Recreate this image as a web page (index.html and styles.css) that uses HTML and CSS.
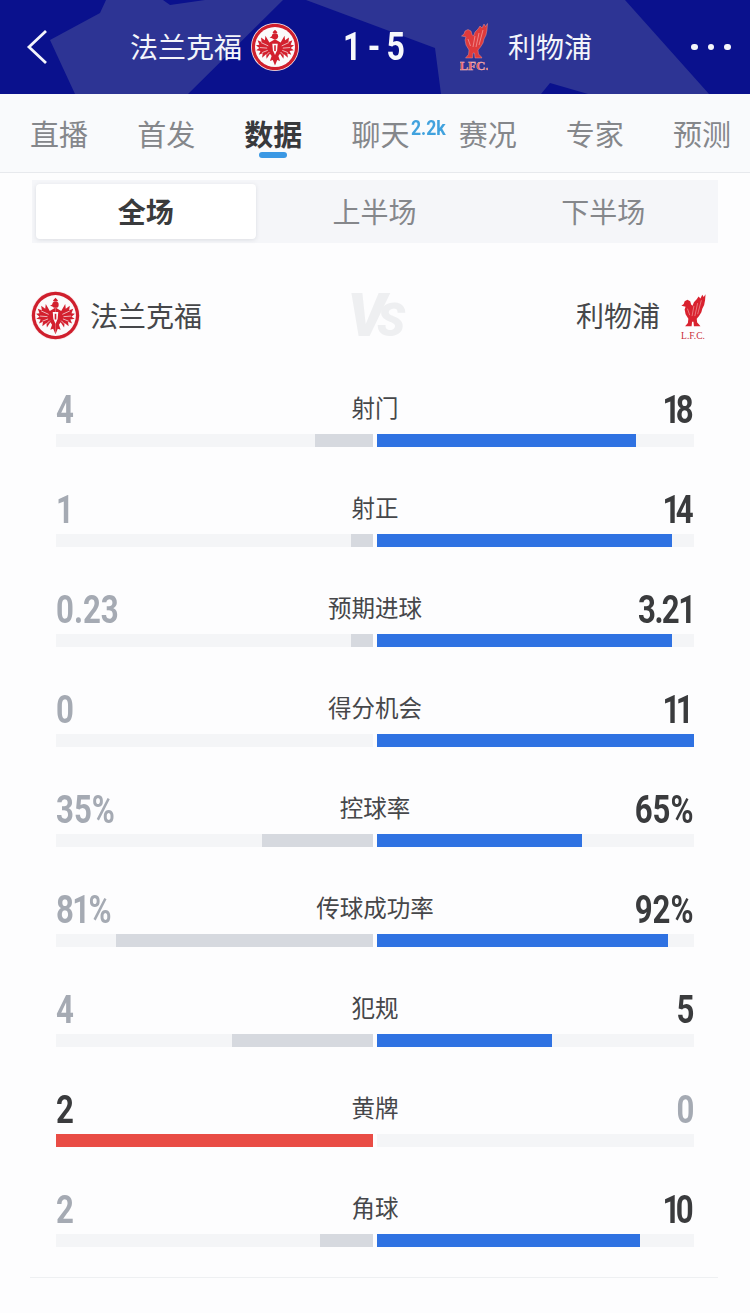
FILE: index.html
```html
<!DOCTYPE html>
<html lang="zh-CN">
<head>
<meta charset="utf-8">
<title>法兰克福 1-5 利物浦</title>
<link rel="stylesheet" href="styles.css">
</head>
<body>
<svg class="defs" width="0" height="0" aria-hidden="true">
  <symbol id="eagle-wing" viewBox="0 0 48 48">
    <path d="M24 17L19 20 15.500 14 15 18 11.500 15.500 12 19.500 8.500 18 10 22 7 22.500 10 25 7.200 26.800 11 27.500 9.500 31 13 29.500 12.500 33.500 16 30.500 16.500 34.500 19.500 30 21 32 19.500 36.500 22 35.500 24 40.500z"/>
    <path class="eagle-line" d="M18 23L11.500 20M17 25L10.500 24.500M17.500 27L12.500 29M19 28.500L15.500 32"/>
  </symbol>
  <symbol id="eagle" viewBox="0 0 48 48">
    <circle cx="24" cy="24" r="24" fill="#fbe9ea"/>
    <circle cx="24" cy="24" r="23.200" fill="#cf1f2d"/>
    <circle cx="24" cy="24" r="20" fill="#fbfbfb"/>
    <g fill="#d3202e" transform="translate(24 24) scale(1.120) translate(-24 -24)">
      <use href="#eagle-wing" width="48" height="48"/>
      <use href="#eagle-wing" width="48" height="48" transform="matrix(-1 0 0 1 48 0)"/>
      <circle cx="24" cy="14.500" r="2.800"/>
      <path d="M22 14l-2.800 1.500 3 .8zM21.800 10.800L24 8.500l2.200 2.300-.8 1h-2.800z"/>
      <path fill="#fbfbfb" d="M21.600 21h4.800l-.5 6-1.900 4.200-1.900-4.200z"/>
      <path d="M23.300 22.500h1.400v5h-1.400z"/>
    </g>
  </symbol>
  <symbol id="liverbird" viewBox="0 0 28 36">
    <path d="M1.500 13L4 11 5 8 8 6.500 11 8 12 11.500 13.500 13 15 9 18 6 20 3 22 5 24 1 25.500 3.500 27.500.5 27 7 26 12 24 16 23 20 20.500 24 18 27 18.500 31 21 33.500 22 35 15 35 14.500 30 13 30 12.500 35 5.500 35 8.500 31.500 9 27 6 22 5 17 6 14 4 13.500z"/>
    <path class="bird-line" d="M15 13L13 24M19 10L16 24M23 7L19 22M8 16L10.500 23"/>
  </symbol>
</svg>

<header class="match-bar">
  <svg class="match-bg" viewBox="0 0 750 94" preserveAspectRatio="none" aria-hidden="true">
    <path class="shard" d="M50 40L100 13 106 0H283L188 94H75z"/>
    <path class="shard" d="M306 0H625L709 94H588L550 83 541 94H441L435 48z"/>
    <path class="notch" d="M163 0H205L170 5z"/>
  </svg>
  <svg class="back" viewBox="0 0 22 36" aria-hidden="true"><path d="M20 2L3 18l17 16"/></svg>
  <div class="match-home">
    <span class="match-team">法兰克福</span>
    <svg class="match-crest"><use href="#eagle"/></svg>
  </div>
  <div class="score"><span class="num score-num">1 - 5</span></div>
  <div class="match-away">
    <svg class="match-bird" viewBox="0 0 28 48" aria-hidden="true">
      <use href="#liverbird" width="28" height="36"/>
      <text x="14" y="46.500" class="lfc-text">LFC.</text>
    </svg>
    <span class="match-team">利物浦</span>
  </div>
  <div class="dots"><i></i><i></i><i></i></div>
</header>

<nav class="tabs">
  <span class="tab">直播</span>
  <span class="tab">首发</span>
  <span class="tab tab-on">数据</span>
  <span class="tab">聊天<b class="tab-badge">2.2k</b></span>
  <span class="tab">赛况</span>
  <span class="tab">专家</span>
  <span class="tab">预测</span>
</nav>

<main>
  <div class="segment">
    <span class="seg seg-on">全场</span>
    <span class="seg">上半场</span>
    <span class="seg">下半场</span>
  </div>

  <div class="teams">
    <div class="team">
      <svg class="team-crest"><use href="#eagle"/></svg>
      <span class="team-name">法兰克福</span>
    </div>
    <div class="vs">VS</div>
    <div class="team team-away">
      <span class="team-name">利物浦</span>
      <svg class="team-bird" viewBox="0 0 26 47" aria-hidden="true">
        <use href="#liverbird" width="26" height="37"/>
        <text x="13" y="46.500" class="lfc-page">L.F.C.</text>
      </svg>
    </div>
  </div>

  <section class="stats">
    <div class="stat">
      <div class="stat-head"><div class="val"><span class="num dim">4</span></div><div class="stat-name">射门</div><div class="val val-r"><span class="num tight">18</span></div></div>
      <div class="bars"><div class="track track-l"><div class="fill gray" style="width:18.3%"></div></div><div class="track"><div class="fill blue" style="width:81.7%"></div></div></div>
    </div>
    <div class="stat">
      <div class="stat-head"><div class="val"><span class="num dim">1</span></div><div class="stat-name">射正</div><div class="val val-r"><span class="num tight">14</span></div></div>
      <div class="bars"><div class="track track-l"><div class="fill gray" style="width:6.9%"></div></div><div class="track"><div class="fill blue" style="width:93%"></div></div></div>
    </div>
    <div class="stat">
      <div class="stat-head"><div class="val"><span class="num dim">0.23</span></div><div class="stat-name">预期进球</div><div class="val val-r"><span class="num snug">3.21</span></div></div>
      <div class="bars"><div class="track track-l"><div class="fill gray" style="width:6.9%"></div></div><div class="track"><div class="fill blue" style="width:93%"></div></div></div>
    </div>
    <div class="stat">
      <div class="stat-head"><div class="val"><span class="num dim">0</span></div><div class="stat-name">得分机会</div><div class="val val-r"><span class="num tight">11</span></div></div>
      <div class="bars"><div class="track track-l"></div><div class="track"><div class="fill blue" style="width:100%"></div></div></div>
    </div>
    <div class="stat">
      <div class="stat-head"><div class="val"><span class="num dim">35%</span></div><div class="stat-name">控球率</div><div class="val val-r"><span class="num">65%</span></div></div>
      <div class="bars"><div class="track track-l"><div class="fill gray" style="width:35%"></div></div><div class="track"><div class="fill blue" style="width:64.7%"></div></div></div>
    </div>
    <div class="stat">
      <div class="stat-head"><div class="val"><span class="num dim snug">81%</span></div><div class="stat-name">传球成功率</div><div class="val val-r"><span class="num">92%</span></div></div>
      <div class="bars"><div class="track track-l"><div class="fill gray" style="width:81%"></div></div><div class="track"><div class="fill blue" style="width:91.8%"></div></div></div>
    </div>
    <div class="stat">
      <div class="stat-head"><div class="val"><span class="num dim">4</span></div><div class="stat-name">犯规</div><div class="val val-r"><span class="num">5</span></div></div>
      <div class="bars"><div class="track track-l"><div class="fill gray" style="width:44.5%"></div></div><div class="track"><div class="fill blue" style="width:55.2%"></div></div></div>
    </div>
    <div class="stat">
      <div class="stat-head"><div class="val"><span class="num">2</span></div><div class="stat-name">黄牌</div><div class="val val-r"><span class="num dim">0</span></div></div>
      <div class="bars"><div class="track track-l"><div class="fill red" style="width:100%"></div></div><div class="track"></div></div>
    </div>
    <div class="stat">
      <div class="stat-head"><div class="val"><span class="num dim">2</span></div><div class="stat-name">角球</div><div class="val val-r"><span class="num tight">10</span></div></div>
      <div class="bars"><div class="track track-l"><div class="fill gray" style="width:16.7%"></div></div><div class="track"><div class="fill blue" style="width:83%"></div></div></div>
    </div>
  </section>
  <div class="end-line"></div>
</main>
</body>
</html>
```
FILE: styles.css
```css
* { box-sizing: border-box; }
html, body { margin: 0; padding: 0; }
body {
  width: 750px;
  height: 1313px;
  overflow: hidden;
  background: #fdfdfe;
  color: #444;
  font-family: "Noto Sans CJK SC", "Noto Sans", sans-serif;
}
.defs { position: absolute; }

.num {
  display: inline-block;
  font-family: Roboto, "Liberation Sans", sans-serif;
  font-weight: 700;
  font-size: 39px;
  line-height: 52px;
  color: #3a3b3d;
  white-space: nowrap;
  transform: scaleX(.8);
  transform-origin: left center;
}
.dim { color: #a5aab3; }
.tight { letter-spacing: -6px; margin-right: 5px; }
.snug { letter-spacing: -2px; }

/* match header */
.match-bar {
  position: relative;
  height: 94px;
  display: flex;
  align-items: center;
  background: #0a118d;
  color: #f4f5fb;
  overflow: hidden;
}
.match-bg { position: absolute; inset: 0; width: 100%; height: 100%; }
.shard { fill: #2d3494; }
.notch { fill: #0a118d; }
.back {
  position: relative;
  width: 22px;
  height: 36px;
  margin-left: 26px;
  fill: none;
  stroke: #f4f5fb;
  stroke-width: 2.800;
}
.match-home, .match-away, .score, .dots { position: relative; display: flex; align-items: center; }
.match-home { margin-left: 82px; width: 170px; gap: 9px; }
.match-team { font-size: 28px; line-height: 40px; margin-bottom: 2px; white-space: nowrap; }
.match-crest { width: 48px; height: 48px; flex: none; }
.score { margin-left: 43px; width: 117px; }
.score-num { color: #f7f8fc; line-height: 50px; transform: scaleX(.82); word-spacing: -2px; }
.match-away { gap: 20px; width: 131px; }
.match-bird { width: 28px; height: 48px; flex: none; fill: #df3a3c; stroke: #f0a9a9; stroke-width: .4; }
.bird-line { fill: none; stroke: #f3a5a5; stroke-width: .7; }
.lfc-text {
  font-family: "Liberation Serif", serif;
  font-size: 13px;
  font-weight: 700;
  text-anchor: middle;
  fill: #e8585a;
  stroke: #f3c4c4;
  stroke-width: .4;
}
.dots { margin-left: 100px; gap: 10px; }
.dots i { width: 6.500px; height: 6.500px; border-radius: 50%; background: #f4f5fb; }

/* tabs */
.tabs {
  height: 79px;
  padding: 0 19px 0 30px;
  display: flex;
  justify-content: space-between;
  align-items: flex-start;
  background: #f9fafc;
  border-bottom: 1px solid #e7e9ed;
}
.tab {
  position: relative;
  width: 58px;
  margin-top: 19px;
  font-size: 29px;
  line-height: 40px;
  color: #85878b;
  white-space: nowrap;
}
.tab-on { color: #38393c; font-weight: 700; }
.tab-on::after {
  content: "";
  position: absolute;
  left: 15px;
  top: 39px;
  width: 28px;
  height: 6px;
  border-radius: 3px;
  background: #3b98e4;
}
.tab-badge {
  position: absolute;
  left: 60px;
  top: 3px;
  font-family: Roboto, "Liberation Sans", sans-serif;
  font-size: 20px;
  line-height: 24px;
  font-weight: 700;
  color: #41a2de;
  transform: scaleX(.88);
  transform-origin: left center;
}

/* segment */
.segment {
  margin: 7px 32px 0;
  height: 63px;
  display: grid;
  grid-template-columns: repeat(3, 1fr);
  background: #f5f6f9;
}
.seg {
  margin: 4px 5px 4px 4px;
  padding-bottom: 2px;
  display: flex;
  align-items: center;
  justify-content: center;
  font-size: 28px;
  color: #85878b;
}
.seg-on {
  background: #fff;
  border-radius: 4px;
  box-shadow: 0 1px 4px rgba(120, 125, 140, .2);
  color: #3a3b3d;
  font-weight: 700;
}

/* teams */
.teams {
  margin-top: 48px;
  padding: 0 44px 0 31px;
  height: 49px;
  display: grid;
  grid-template-columns: 1fr auto 1fr;
  align-items: center;
}
.team { display: flex; align-items: center; gap: 10px; }
.team-away { justify-content: flex-end; gap: 20px; }
.team-crest { width: 49px; height: 49px; flex: none; }
.team-name { font-size: 28px; line-height: 40px; margin-bottom: 2px; color: #46474a; white-space: nowrap; }
.team-bird { width: 26px; height: 47px; flex: none; fill: #d9222f; }
.team-bird .bird-line { stroke: #f08a8a; }
.lfc-page {
  font-family: "Liberation Serif", serif;
  font-size: 9.500px;
  text-anchor: middle;
  fill: #c92a35;
}
.vs {
  margin-left: 13px;
  width: 55px;
  height: 49px;
  font-family: Roboto, "Liberation Sans", sans-serif;
  font-style: italic;
  font-weight: 900;
  font-size: 46px;
  line-height: 49px;
  color: #eeeff1;
  white-space: nowrap;
  filter: blur(.6px);
}
.vs::first-letter { font-size: 60px; letter-spacing: -9px; }

/* stats */
.stats {
  margin-top: 44px;
  padding: 0 56px;
  display: flex;
  flex-direction: column;
  gap: 37px;
}
.stat-head {
  height: 50px;
  display: grid;
  grid-template-columns: 1fr auto 1fr;
  align-items: center;
}
.val { height: 50px; }
.val-r { text-align: right; }
.val-r .num { transform-origin: right center; }
.stat-name { font-size: 23.500px; line-height: 46px; height: 50px; color: #46474a; }
.bars {
  height: 13px;
  display: grid;
  grid-template-columns: 317px 317px;
  gap: 4px;
}
.track { background: #f4f5f7; display: flex; }
.track-l { justify-content: flex-end; }
.fill { height: 100%; }
.gray { background: #d6d9df; }
.blue { background: #2f72e2; }
.red { background: #e94c45; }
.eagle-line { fill: none; stroke: #fbfbfb; stroke-width: .6; }

.end-line {
  margin: 30px 32px 0 30px;
  height: 1px;
  background: #eef0f2;
}
```
